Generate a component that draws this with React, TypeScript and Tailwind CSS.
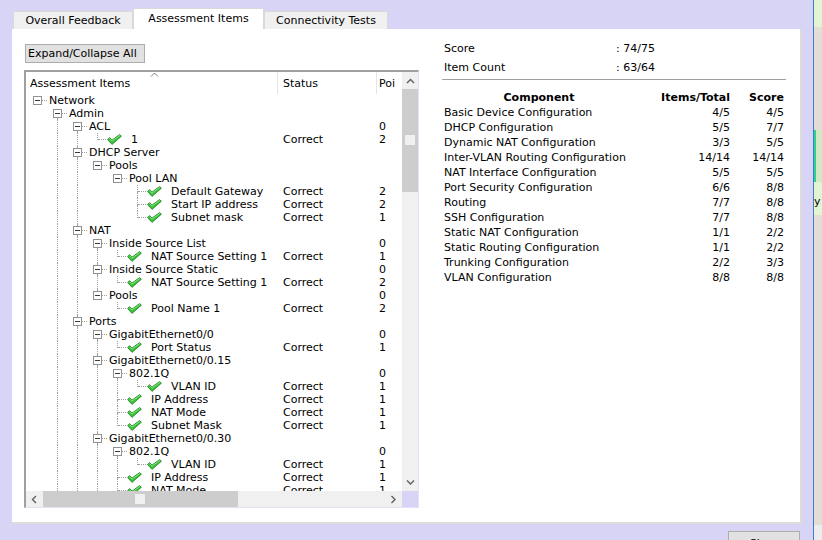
import React from 'react';

type Item = {
  label: string;
  level: number;
  leaf?: boolean;
  status?: string;
  pts?: string;
};

const items: Item[] = [
  { label: 'Network', level: 0 },
  { label: 'Admin', level: 1 },
  { label: 'ACL', level: 2, pts: '0' },
  { label: '1', level: 3, leaf: true, status: 'Correct', pts: '2' },
  { label: 'DHCP Server', level: 2 },
  { label: 'Pools', level: 3 },
  { label: 'Pool LAN', level: 4 },
  { label: 'Default Gateway', level: 5, leaf: true, status: 'Correct', pts: '2' },
  { label: 'Start IP address', level: 5, leaf: true, status: 'Correct', pts: '2' },
  { label: 'Subnet mask', level: 5, leaf: true, status: 'Correct', pts: '1' },
  { label: 'NAT', level: 2 },
  { label: 'Inside Source List', level: 3, pts: '0' },
  { label: 'NAT Source Setting 1', level: 4, leaf: true, status: 'Correct', pts: '1' },
  { label: 'Inside Source Static', level: 3, pts: '0' },
  { label: 'NAT Source Setting 1', level: 4, leaf: true, status: 'Correct', pts: '2' },
  { label: 'Pools', level: 3, pts: '0' },
  { label: 'Pool Name 1', level: 4, leaf: true, status: 'Correct', pts: '2' },
  { label: 'Ports', level: 2 },
  { label: 'GigabitEthernet0/0', level: 3, pts: '0' },
  { label: 'Port Status', level: 4, leaf: true, status: 'Correct', pts: '1' },
  { label: 'GigabitEthernet0/0.15', level: 3 },
  { label: '802.1Q', level: 4, pts: '0' },
  { label: 'VLAN ID', level: 5, leaf: true, status: 'Correct', pts: '1' },
  { label: 'IP Address', level: 4, leaf: true, status: 'Correct', pts: '1' },
  { label: 'NAT Mode', level: 4, leaf: true, status: 'Correct', pts: '1' },
  { label: 'Subnet Mask', level: 4, leaf: true, status: 'Correct', pts: '1' },
  { label: 'GigabitEthernet0/0.30', level: 3 },
  { label: '802.1Q', level: 4, pts: '0' },
  { label: 'VLAN ID', level: 5, leaf: true, status: 'Correct', pts: '1' },
  { label: 'IP Address', level: 4, leaf: true, status: 'Correct', pts: '1' },
  { label: 'NAT Mode', level: 4, leaf: true, status: 'Correct', pts: '1' },
  { label: 'Subnet Mask', level: 4, leaf: true, status: 'Correct', pts: '1' },
  { label: 'GigabitEthernet0/1', level: 3 },
  { label: 'Routing', level: 2 },
  { label: 'Switch', level: 1 },
];

const components = [
  ['Basic Device Configuration', '4/5', '4/5'],
  ['DHCP Configuration', '5/5', '7/7'],
  ['Dynamic NAT Configuration', '3/3', '5/5'],
  ['Inter-VLAN Routing Configuration', '14/14', '14/14'],
  ['NAT Interface Configuration', '5/5', '5/5'],
  ['Port Security Configuration', '6/6', '8/8'],
  ['Routing', '7/7', '8/8'],
  ['SSH Configuration', '7/7', '8/8'],
  ['Static NAT Configuration', '1/1', '2/2'],
  ['Static Routing Configuration', '1/1', '2/2'],
  ['Trunking Configuration', '2/2', '3/3'],
  ['VLAN Configuration', '8/8', '8/8'],
];

// work out which connector lines each row needs
const rows = (() => {
  const nextAt: boolean[] = [];
  return items.map((it, i) => {
    let hasNext = false;
    for (let j = i + 1; j < items.length; j++) {
      if (items[j].level < it.level) break;
      if (items[j].level === it.level) {
        hasNext = true;
        break;
      }
    }
    let hasPrev = false;
    for (let j = i - 1; j >= 0; j--) {
      if (items[j].level < it.level) break;
      if (items[j].level === it.level) {
        hasPrev = true;
        break;
      }
    }
    nextAt[it.level] = hasNext;
    const guides = nextAt.slice(0, it.level);
    return { ...it, hasNext, hasPrev, guides };
  });
})();

const dot = 'border-dotted border-[#a0a0a0]';

const Check = () => (
  <svg width="15" height="11" viewBox="0 0 15 11" className="shrink-0">
    <path
      d="M0.6 5.6 L2.6 3.6 L5 6.1 L12.6 0.6 L14.4 2.2 L5 10.4 Z"
      fill="#3cc23c"
      stroke="#1f7d1f"
      strokeWidth="0.8"
      strokeLinejoin="round"
    />
    <path d="M2.6 4.6 L5 7 L13 1.3" fill="none" stroke="#8ef08e" strokeWidth="0.8" />
  </svg>
);

const Chevron = ({ dir }: { dir: 'up' | 'down' | 'left' | 'right' }) => {
  const pts = {
    up: '1,5 4.5,1.5 8,5',
    down: '1,1.5 4.5,5 8,1.5',
    left: '5,1 1.5,4.5 5,8',
    right: '1.5,1 5,4.5 1.5,8',
  }[dir];
  const w = dir === 'up' || dir === 'down' ? 9 : 7;
  const h = dir === 'up' || dir === 'down' ? 7 : 9;
  return (
    <svg width={w} height={h} viewBox={`0 0 ${w} ${h}`}>
      <polyline points={pts} fill="none" stroke="#606060" strokeWidth="1.4" />
    </svg>
  );
};

const TreeRow = ({ row }: { row: (typeof rows)[number] }) => (
  <div className="flex h-[13px] shrink-0 whitespace-nowrap">
    <div className="flex w-[252px] shrink-0 overflow-hidden pl-[7px]">
      {row.guides.map((g, i) => (
        <div key={i} className="w-[20px] shrink-0">
          {g && <div className={`ml-[4px] h-full border-l ${dot}`} />}
        </div>
      ))}
      {row.leaf ? (
        <div className="flex w-[38px] shrink-0">
          <div className="ml-[4px] flex w-px flex-col">
            <div className={`h-[7px] border-l ${dot}`} />
            {row.hasNext && <div className={`flex-1 border-l ${dot}`} />}
          </div>
          <div className={`mt-[6px] h-0 w-[8px] border-t ${dot}`} />
          <div className="ml-px mt-px">
            <Check />
          </div>
        </div>
      ) : (
        <div className="flex w-[16px] shrink-0">
          <div className="flex w-[9px] flex-col">
            <div className="h-[2px]">{row.hasPrev && <div className={`ml-[4px] h-full border-l ${dot}`} />}</div>
            <div className="flex h-[9px] w-[9px] items-center justify-center border border-[#919191] bg-white">
              <div className="h-px w-[5px] bg-[#3a3a3a]" />
            </div>
            <div className="flex-1">{row.hasNext && <div className={`ml-[4px] h-full border-l ${dot}`} />}</div>
          </div>
          <div className={`mt-[6px] h-0 w-[5px] border-t ${dot}`} />
        </div>
      )}
      <span>{row.label}</span>
    </div>
    <div className="w-[99px] shrink-0 pl-[5px]">{row.status}</div>
    <div className="pl-[2px]">{row.pts}</div>
  </div>
);

const Tab = ({ label, active, width }: { label: string; active?: boolean; width: string }) => (
  <div
    className={`flex items-center justify-center border border-b-0 border-[#d9d9d9] ${width} ${
      active ? 'h-[21px] bg-white pb-[2px]' : 'h-[18px] bg-[#f0f0f0]'
    }`}
  >
    {label}
  </div>
);

export default function App() {
  return (
    <div className="flex h-[540px] w-[822px] overflow-hidden font-['DejaVu_Sans',sans-serif] text-[11px] leading-[13px] text-black">
      <div className="flex w-[813px] shrink-0 flex-col bg-[#d8d4f5] pl-[12px] pt-[8px]">
        <div className="ml-px flex h-[21px] items-end">
          <Tab label="Overall Feedback" width="w-[120px]" />
          <Tab label="Assessment Items" width="w-[131px]" active />
          <Tab label="Connectivity Tests" width="w-[124px]" />
        </div>

        <div className="flex h-[495px] w-[790px] shrink-0 border-b-2 border-r-2 border-[#dcdcdc] bg-white pl-[12px]">
          <div className="flex flex-col pt-[15px]">
            <button className="ml-px h-[19px] w-[120px] border border-[#adadad] bg-[#e1e1e1] pl-[2px] text-left">
              Expand/Collapse All
            </button>

            <div className="mt-[7px] grid w-[395px] grid-cols-[376px_16px] grid-rows-[419px_16px] border-b border-l-2 border-r border-t-2 border-b-[#e3e0f8] border-l-[#a0a0a0] border-r-[#e3e0f8] border-t-[#a0a0a0]">
              <div className="flex flex-col overflow-hidden">
                <div className="flex h-[22px] shrink-0 items-center">
                  <div className="relative flex h-full w-[252px] shrink-0 items-center border-r border-[#e5e5e5] pl-[4px]">
                    Assessment Items
                    <svg width="9" height="5" viewBox="0 0 9 5" className="absolute left-[124px] top-0">
                      <polyline points="1,4.5 4.5,1 8,4.5" fill="none" stroke="#808080" strokeWidth="1" />
                    </svg>
                  </div>
                  <div className="flex h-full w-[99px] shrink-0 items-center border-r border-[#e5e5e5] pl-[5px]">Status</div>
                  <div className="whitespace-nowrap pl-[2px]">Poi</div>
                </div>
                <div className="flex flex-1 flex-col overflow-hidden">
                  {rows.map((r, i) => (
                    <TreeRow key={i} row={r} />
                  ))}
                </div>
              </div>

              <div className="flex flex-col bg-[#f0f0f0]">
                <div className="flex h-[17px] items-center justify-center pt-px">
                  <Chevron dir="up" />
                </div>
                <div className="flex h-[103px] justify-center bg-[#cdcdcd] pt-[46px]">
                  <div className="h-[10px] w-[10px] bg-[#f0f0f0]" />
                </div>
                <div className="flex-1" />
                <div className="flex h-[17px] items-center justify-center">
                  <Chevron dir="down" />
                </div>
              </div>

              <div className="flex bg-[#f0f0f0]">
                <div className="flex w-[17px] items-center justify-center">
                  <Chevron dir="left" />
                </div>
                <div className="flex w-[195px] items-center bg-[#cdcdcd] pl-[92px]">
                  <div className="h-[10px] w-[10px] bg-[#f0f0f0]" />
                </div>
                <div className="flex-1" />
                <div className="flex w-[17px] items-center justify-center">
                  <Chevron dir="right" />
                </div>
              </div>
              <div className="bg-[#d8d4f5]" />
            </div>
          </div>

          <div className="ml-[23px] flex w-[344px] flex-col pt-[10px]">
            <div className="flex h-[19px] items-center pl-[2px]">
              <span className="w-[172px]">Score</span>
              <span>: 74/75</span>
            </div>
            <div className="flex h-[19px] items-center pl-[2px]">
              <span className="w-[172px]">Item Count</span>
              <span>: 63/64</span>
            </div>
            <div className="mt-[2px] h-px bg-[#a0a0a0]" />
            <div className="mt-[10px] grid grid-cols-[194px_94px_56px] leading-[15px]">
              <div className="text-center font-bold">Component</div>
              <div className="text-right font-bold">Items/Total</div>
              <div className="pr-[2px] text-right font-bold">Score</div>
              {components.map(([name, items, score]) => (
                <React.Fragment key={name}>
                  <div className="pl-[2px]">{name}</div>
                  <div className="text-right">{items}</div>
                  <div className="pr-[2px] text-right">{score}</div>
                </React.Fragment>
              ))}
            </div>
          </div>
        </div>

        <div className="flex justify-end pr-[13px] pt-[7px]">
          <button className="h-[24px] w-[72px] border border-[#adadad] bg-[#e1e1e1]">Close</button>
        </div>
      </div>

      <div className="w-px shrink-0 bg-[#3b7fd4]" />
      <div className="flex w-[8px] shrink-0 flex-col bg-[#e4ddd6]">
        <div className="h-[27px] shrink-0 bg-[#e2f4d2]" />
        <div className="h-[103px] shrink-0" />
        <div className="h-[52px] shrink-0 border-l-2 border-[#2fcf98] bg-[#d3e9c4]" />
        <div className="h-[33px] shrink-0 bg-[#e2f4d2] pt-[13px]">y</div>
        <div className="flex-1" />
        <div className="h-[15px] shrink-0 bg-[#ececec]" />
      </div>
    </div>
  );
}
